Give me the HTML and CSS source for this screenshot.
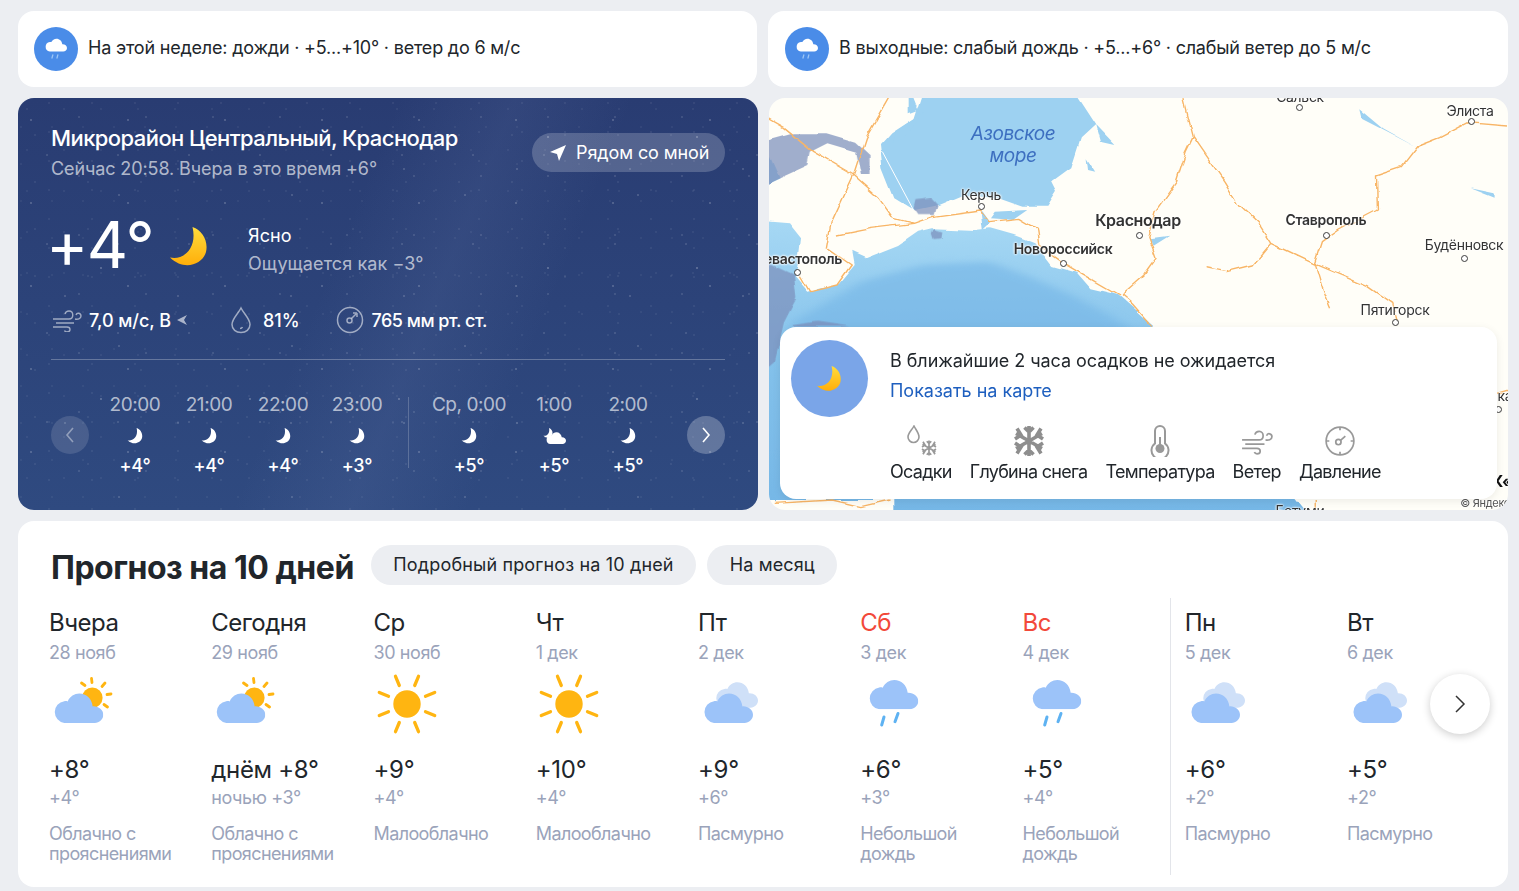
FILE: index.html
```html
<!DOCTYPE html>
<html lang="ru">
<head>
<meta charset="utf-8">
<title>Погода в Краснодаре</title>
<link rel="stylesheet" href="styles.css">
</head>
<body>
<svg class="defs" width="0" height="0" aria-hidden="true">
  <defs>
    <linearGradient id="moonGrad" x1="0" y1="0" x2="0" y2="1"><stop offset="0" stop-color="#ffdc3c"/><stop offset="1" stop-color="#ffae0a"/></linearGradient>
    <symbol id="moon" viewBox="0 0 16 16"><path d="M9.6 0C13.6 1.4 16 5.6 15 10 13.8 14.6 6.6 18 .6 12.2 6 13.4 11.6 8.6 9.6 0Z"/></symbol>
    <symbol id="cloud" viewBox="0 0 50 30"><path d="M11 30A11 11 0 0 1 11 8.2C12 8 13.4 8 14.4 8.4 16.6 3.4 21.2.6 26 .6 33 .6 38.400 5.600 39.400 13.400 45 13 50 16.800 50 21.800 50 26.400 46 30 41.500 30Z"/></symbol>
    <symbol id="wind" viewBox="0 0 30 24"><path d="M1 11H17C22 11 22 3 17 3 15 3 13.500 4 13 6M4 15H22M1 19H15C19 19 19 24 15 24 14 24 13 23.500 12.500 22.500M24 7C25 4 29 5 29 8 29 11 25.500 11.500 23 11"/></symbol>
    <symbol id="gauge" viewBox="0 0 30 30"><circle cx="15" cy="15" r="13"/><path d="M15 2V5M15 25V28M2 15H5M25 15H28"/><circle cx="13.500" cy="16" r="2.500"/><path d="M15.500 14.500L20 10.500"/></symbol>
    <symbol id="sunFull" viewBox="0 0 64 64">
      <circle cx="33" cy="32" r="13.700" class="sun"/>
      <path class="ray" d="M25.300 13.500L21.500 4.300M40.700 13.500L44.500 4.300M51.500 24.300L60.700 20.500M51.500 39.700L60.700 43.500M40.700 50.500L44.500 59.700M25.300 50.500L21.500 59.700M14.500 39.700L5.300 43.500M14.500 24.300L5.300 20.500"/>
    </symbol>
    <symbol id="partly" viewBox="0 0 64 64">
      <circle cx="43.300" cy="25.700" r="10.300" class="sun"/>
      <path class="ray ray-s" d="M43 10.500L42.500 6.500M53 14.500L56 11M58 22.500L62 22M55 32.500L58.500 35M36 13.500L32.500 11"/>
      <use href="#cloud" x="4.300" y="21" width="50" height="30" class="cloud-main"/>
    </symbol>
    <symbol id="overcast" viewBox="0 0 64 64">
      <use href="#cloud" x="17" y="8.500" width="43" height="28.500" class="cloud-back"/>
      <use href="#cloud" x="5" y="21" width="50" height="30" class="cloud-main"/>
    </symbol>
    <symbol id="rain" viewBox="0 0 64 64">
      <use href="#cloud" x="8.300" y="7.300" width="50" height="30" class="cloud-main"/>
      <path class="drops" d="M21.700 53L24 45M35 49.700L38 41.500"/>
    </symbol>
    <symbol id="badge" viewBox="0 0 44 44">
      <circle cx="22" cy="22" r="22" class="badge-bg"/>
      <use href="#cloud" x="11" y="11" width="22" height="14" class="badge-cloud"/>
      <path class="badge-drops" d="M18 31L18.800 28M23 31L23.800 28"/>
    </symbol>
    <symbol id="flake" viewBox="0 0 32 32"><path d="M16 1V31M3 8.500L29 23.500M3 23.500L29 8.500M11.500 2.500L16 7 20.500 2.500M11.500 29.500L16 25 20.500 29.500M2 14L8 10 4 3.500M30 18L24 22 28 28.500M30 14L24 10 28 3.500M2 18L8 22 4 28.500"/></symbol>
  </defs>
</svg>

<main class="page">
  <div class="summary-row">
    <a class="summary">
      <svg class="badge"><use href="#badge"/></svg>
      <span>На этой неделе: дожди · +5...+10° · ветер до 6 м/с</span>
    </a>
    <a class="summary">
      <svg class="badge"><use href="#badge"/></svg>
      <span>В выходные: слабый дождь · +5...+6° · слабый ветер до 5 м/с</span>
    </a>
  </div>

  <div class="main-row">
    <section class="hero">
      <div class="hero-head">
        <div>
          <h1 class="place">Микрорайон Центральный, Краснодар</h1>
          <p class="now">Сейчас 20:58. Вчера в это время +6°</p>
        </div>
        <button class="near">
          <svg class="near-icon" viewBox="0 0 16 16"><path d="M16 0L0 7 7 9 9 16Z"/></svg>
          Рядом со мной
        </button>
      </div>

      <div class="current">
        <div class="temp-big">+4°</div>
        <svg class="moon-big"><use href="#moon"/></svg>
        <div class="cond">
          <div>Ясно</div>
          <div class="feels">Ощущается как −3°</div>
        </div>
      </div>

      <div class="stats">
        <svg class="stat-wind"><use href="#wind"/></svg>
        <span class="stat-text stat-loose">7,0 м/с, В</span>
        <svg class="stat-dir" viewBox="0 0 10 10"><path d="M0 5L10 0 7 5 10 10Z"/></svg>
        <svg class="stat-drop" viewBox="0 0 22 28"><path d="M11 2C8 8 2 13 2 18.500 2 23.500 6 26.500 11 26.500 16 26.500 20 23.500 20 18.500 20 13 14 8 11 2ZM12.500 21C12 22 11 22.500 10 22.500"/></svg>
        <span class="stat-text stat-loose">81%</span>
        <svg class="stat-gauge" viewBox="0 0 28 28"><circle cx="14" cy="14" r="12.500"/><path d="M20 8L15.500 12.500M21 7H17M21 7V11"/><circle cx="13.500" cy="14.500" r="2.500"/></svg>
        <span class="stat-text">765 мм рт. ст.</span>
      </div>

      <div class="rule"></div>

      <div class="hours">
        <button class="hour-btn hour-btn-off"><svg viewBox="0 0 10 18"><path d="M8 2L2 9 8 16"/></svg></button>
        <div class="hour"><div class="hour-time">20:00</div><svg class="hour-icon"><use href="#moon"/></svg><div class="hour-temp">+4°</div></div>
        <div class="hour"><div class="hour-time">21:00</div><svg class="hour-icon"><use href="#moon"/></svg><div class="hour-temp">+4°</div></div>
        <div class="hour"><div class="hour-time">22:00</div><svg class="hour-icon"><use href="#moon"/></svg><div class="hour-temp">+4°</div></div>
        <div class="hour"><div class="hour-time">23:00</div><svg class="hour-icon"><use href="#moon"/></svg><div class="hour-temp">+3°</div></div>
        <div class="hour-sep"></div>
        <div class="hour hour-wide"><div class="hour-time">Ср, 0:00</div><svg class="hour-icon"><use href="#moon"/></svg><div class="hour-temp">+5°</div></div>
        <div class="hour"><div class="hour-time">1:00</div>
          <svg class="hour-icon hour-icon-cloud" viewBox="0 0 24 16"><use href="#moon" x="1" y="0" width="10" height="10"/><use href="#cloud" x="4" y="4" width="20" height="12"/></svg>
          <div class="hour-temp">+5°</div></div>
        <div class="hour"><div class="hour-time">2:00</div><svg class="hour-icon"><use href="#moon"/></svg><div class="hour-temp">+5°</div></div>
        <button class="hour-btn hour-btn-next"><svg viewBox="0 0 10 18"><path d="M2 2L8 9 2 16"/></svg></button>
      </div>
    </section>

    <section class="map">
      <svg class="map-art" viewBox="8 9 1545 1236" preserveAspectRatio="none">
        <defs>
          <linearGradient id="seaGrad" x1="0" y1="0" x2="0" y2="1"><stop offset="0" stop-color="#a6d8f4"/><stop offset=".5" stop-color="#82c0ea"/><stop offset="1" stop-color="#74b6e6"/></linearGradient>
          <filter id="wobble" x="-5%" y="-5%" width="110%" height="110%"><feTurbulence type="fractalNoise" baseFrequency=".018" numOctaves="3" seed="4"/><feDisplacementMap in="SourceGraphic" scale="16" xChannelSelector="R" yChannelSelector="G"/></filter>
          <filter id="soft" x="-10%" y="-10%" width="120%" height="120%"><feGaussianBlur stdDeviation="14 10"/></filter>
          <filter id="coast" x="-5%" y="-5%" width="110%" height="110%"><feTurbulence type="fractalNoise" baseFrequency=".014" numOctaves="2" seed="9"/><feDisplacementMap in="SourceGraphic" scale="14" xChannelSelector="R" yChannelSelector="G"/><feGaussianBlur stdDeviation="1.500 1"/></filter>
        </defs>
        <g class="f-coast">
          <path class="azov" d="M330 -20H640L690 90 660 130 640 220 600 262 610 290 590 335 540 335 490 310 410 300 360 330 310 345 270 310 245 220 240 150 262 115 310 70Z"/>
          <path class="azov" d="M690 90L730 150 700 140ZM672 190L690 230 675 225ZM300 -20L318 45 300 55ZM270 110L330 50 290 130 262 145ZM805 430L845 422 812 452ZM480 350L550 345 520 375 470 370ZM450 345L470 385 455 405ZM1240 40L1290 100 1365 160 1300 110 1245 70ZM1475 280L1525 295 1525 308Z"/>
          <path class="sea" d="M-30 375L50 385 75 430 70 490 60 540 90 590 150 570 185 510 180 470 210 490 280 450 320 410 350 400 440 405 470 400 520 420 565 445 600 510 650 530 680 580 740 600 780 650 815 695 1150 1290H270L270 1215H-30Z"/>
        </g>
        <path class="sea-deep" d="M60 680L200 560 330 510 470 500 560 550 640 600 720 660 780 720H60Z"/>
        <g class="f-coast">
          <path class="azov" d="M-30 60L30 250 -30 290Z"/>
          <path class="overlay" d="M-30 150L60 115 130 115 190 140 220 180 220 237 200 237 190 170 130 145 95 170 90 210 30 250 -30 290Z"/>
          <path class="overlay" d="M312 315L345 310 358 330 352 360 318 360 308 340ZM352 402L368 410 366 430 352 432 348 415ZM-30 480L60 540 65 610 40 680 20 800 -30 860ZM60 690L110 680 180 695H60Z"/>
        </g>
        <path class="strait" d="M245 170L310 345"/>
        <path class="road" d="M870 -20L885 70 895 125 880 170 860 260 815 350 800 430 815 490 790 540 750 590 745 600 770 630 810 695M895 125L960 260 990 330 1030 385 1057 445 1150 508 1260 575 1310 625 1320 680M1057 445L1020 510 965 530 925 518M1150 508L1165 440 1200 405 1280 345 1278 240 1330 215 1365 150 1410 125 1470 80 1553 90M1150 508L1165 580 1182 640M-10 60L40 100 100 170 185 240 240 310 270 370 310 385 350 365 450 345 470 380 530 370 565 400 570 450 620 500 680 550 740 600M185 240L140 380 130 460 180 510 150 570 95 590 75 540M150 420L220 400 310 385M270 -20L210 130 185 240M20 1225L140 1215 200 1235 260 1215M1150 1215L1150 1290M1520 900L1580 875"/>
      </svg>

      <span class="sea-name">Азовское<br>море</span>
      <span class="lbl lbl-salsk">Сальск</span><i class="pin pin-salsk"></i>
      <span class="lbl lbl-elista">Элиста</span><i class="pin pin-elista"></i>
      <span class="lbl lbl-kerch">Керчь</span><i class="pin pin-kerch"></i>
      <span class="lbl lbl-bold lbl-krasnodar">Краснодар</span><i class="pin pin-krasnodar"></i>
      <span class="lbl lbl-semi lbl-stavropol">Ставрополь</span><i class="pin pin-stavropol"></i>
      <span class="lbl lbl-semi lbl-novo">Новороссийск</span><i class="pin pin-novo"></i>
      <span class="lbl lbl-semi lbl-sev">Севастополь</span><i class="pin pin-sev"></i>
      <span class="lbl lbl-bud">Будённовск</span><i class="pin pin-bud"></i>
      <span class="lbl lbl-pyat">Пятигорск</span><i class="pin pin-pyat"></i>
      <span class="lbl lbl-frag">ка</span><i class="pin pin-frag"></i>
      <span class="lbl lbl-batumi">Батуми</span>
      <span class="lbl lbl-kk">К«</span>
      <span class="lbl lbl-copy">© Яндекс</span>

      <div class="nowcast">
        <div class="nowcast-top">
          <div class="nowcast-circle"><svg class="nowcast-moon"><use href="#moon"/></svg></div>
          <div class="nowcast-text">
            <div class="nowcast-title">В ближайшие 2 часа осадков не ожидается</div>
            <a class="nowcast-link">Показать на карте</a>
          </div>
        </div>
        <div class="layers">
          <div class="layer">
            <svg class="layer-icon" viewBox="0 0 32 32">
              <path class="ic-line" d="M9 1C7 5 3 8 3 12 3 15 5.500 17.500 8.500 17.500 11.500 17.500 14 15 14 12 14 8 11 5 9 1Z"/>
              <use href="#flake" x="16" y="15" width="16" height="16" class="ic-flake-s"/>
            </svg>
            <span>Осадки</span>
          </div>
          <div class="layer"><svg class="layer-icon"><use href="#flake" class="ic-flake"/></svg><span>Глубина снега</span></div>
          <div class="layer">
            <svg class="layer-icon" viewBox="0 0 32 32">
              <path class="ic-line ic-thick" d="M11 6A5 5 0 0 1 21 6V18.500A8.500 8.500 0 1 1 11 18.500Z"/>
              <circle cx="16" cy="23.500" r="4.500" class="ic-fill"/><path class="ic-line ic-thick" d="M16 12V22"/>
            </svg>
            <span>Температура</span>
          </div>
          <div class="layer"><svg class="layer-icon"><use href="#wind" class="ic-line"/></svg><span>Ветер</span></div>
          <div class="layer"><svg class="layer-icon"><use href="#gauge" class="ic-line"/></svg><span>Давление</span></div>
        </div>
      </div>
    </section>
  </div>

  <section class="forecast">
    <div class="fc-head">
      <h2 class="fc-title">Прогноз на 10 дней</h2>
      <a class="pill">Подробный прогноз на 10 дней</a>
      <a class="pill">На месяц</a>
    </div>
    <div class="days">
      <div class="day"><div class="d-name">Вчера</div><div class="d-date">28 нояб</div><svg class="d-icon"><use href="#partly"/></svg><div class="d-hi">+8°</div><div class="d-lo">+4°</div><div class="d-desc">Облачно с прояснениями</div></div>
      <div class="day"><div class="d-name">Сегодня</div><div class="d-date">29 нояб</div><svg class="d-icon"><use href="#partly"/></svg><div class="d-hi">днём +8°</div><div class="d-lo">ночью +3°</div><div class="d-desc">Облачно с прояснениями</div></div>
      <div class="day"><div class="d-name">Ср</div><div class="d-date">30 нояб</div><svg class="d-icon"><use href="#sunFull"/></svg><div class="d-hi">+9°</div><div class="d-lo">+4°</div><div class="d-desc">Малооблачно</div></div>
      <div class="day"><div class="d-name">Чт</div><div class="d-date">1 дек</div><svg class="d-icon"><use href="#sunFull"/></svg><div class="d-hi">+10°</div><div class="d-lo">+4°</div><div class="d-desc">Малооблачно</div></div>
      <div class="day"><div class="d-name">Пт</div><div class="d-date">2 дек</div><svg class="d-icon"><use href="#overcast"/></svg><div class="d-hi">+9°</div><div class="d-lo">+6°</div><div class="d-desc">Пасмурно</div></div>
      <div class="day"><div class="d-name d-red">Сб</div><div class="d-date">3 дек</div><svg class="d-icon"><use href="#rain"/></svg><div class="d-hi">+6°</div><div class="d-lo">+3°</div><div class="d-desc">Небольшой дождь</div></div>
      <div class="day"><div class="d-name d-red">Вс</div><div class="d-date">4 дек</div><svg class="d-icon"><use href="#rain"/></svg><div class="d-hi">+5°</div><div class="d-lo">+4°</div><div class="d-desc">Небольшой дождь</div></div>
      <div class="day day-week"><div class="d-name">Пн</div><div class="d-date">5 дек</div><svg class="d-icon"><use href="#overcast"/></svg><div class="d-hi">+6°</div><div class="d-lo">+2°</div><div class="d-desc">Пасмурно</div></div>
      <div class="day"><div class="d-name">Вт</div><div class="d-date">6 дек</div><svg class="d-icon"><use href="#overcast"/></svg><div class="d-hi">+5°</div><div class="d-lo">+2°</div><div class="d-desc">Пасмурно</div></div>
    </div>
    <button class="fc-next"><svg viewBox="0 0 12 20"><path d="M2 2L10 10 2 18"/></svg></button>
  </section>
</main>
</body>
</html>
```

FILE: styles.css
```css
* { box-sizing: border-box; }
html, body { margin: 0; height: 891px; overflow: hidden; }
body {
  background: #eceef2;
  font-family: Inter, "Noto Sans", Roboto, sans-serif;
  font-size: 18px;
  color: #21262b;
}
.defs { position: absolute; }
h1, h2, p { margin: 0; }
button { border: 0; padding: 0; font: inherit; color: inherit; }

.page { padding: 11px 11px 0 18px; display: flex; flex-direction: column; gap: 11px; }
.summary-row { display: grid; grid-template-columns: 739px 740px; gap: 11px; }
.main-row { display: grid; grid-template-columns: 740px 739px; gap: 11px; }

.summary {
  height: 76px; background: #fff; border-radius: 16px;
  display: flex; align-items: center; gap: 10px; padding: 0 0 1px 16px;
  font-size: 18px; letter-spacing: -0.2px;
}
.summary span { margin-bottom: 2px; }
.summary + .summary { padding-left: 17px; }
.badge { width: 44px; height: 44px; flex: none; }
.badge-bg { fill: #4a8ce8; }
.badge-cloud { fill: #fff; }
.badge-drops { stroke: #9cc6f5; stroke-width: 1.3; stroke-linecap: round; fill: none; }

/* Hero */
.hero {
  height: 412px; border-radius: 16px; padding: 27px 33px 0; color: #fff; overflow: hidden;
  background:
    radial-gradient(1px 1px at 13px 22px, rgba(255,255,255,.6), transparent),
    radial-gradient(1px 1px at 47px 71px, rgba(255,255,255,.5), transparent),
    radial-gradient(1.5px 1.5px at 83px 39px, rgba(255,255,255,.4), transparent),
    radial-gradient(1px 1px at 29px 57px, rgba(255,255,255,.4), transparent),
    radial-gradient(1px 1px at 101px 97px, rgba(255,255,255,.5), transparent),
    radial-gradient(1px 1px at 9px 11px, rgba(255,255,255,.18), transparent),
    radial-gradient(1px 1px at 31px 5px, rgba(255,255,255,.2), transparent),
    radial-gradient(1px 1px at 17px 37px, rgba(255,255,255,.22), transparent),
    radial-gradient(1.5px 1.5px at 61px 19px, rgba(255,255,255,.2), transparent),
    radial-gradient(1px 1px at 3px 29px, rgba(255,255,255,.16), transparent),
    linear-gradient(112deg, transparent 42%, rgba(120,140,190,.12) 55%, transparent 68%),
    linear-gradient(180deg, #293c72 0%, #2f4a80 100%);
  background-size: 97px 83px, 113px 127px, 149px 131px, 71px 89px, 173px 151px, 37px 41px, 43px 29px, 53px 47px, 67px 59px, 31px 37px, auto, auto;
}
.hero-head { display: flex; justify-content: space-between; align-items: flex-start; }
.place { font-size: 22px; font-weight: 500; line-height: 26px; letter-spacing: -0.57px; }
.now { margin-top: 6px; line-height: 24px; color: rgba(255,255,255,.65); letter-spacing: -0.11px; }
.near {
  margin-top: 8px; width: 193px; height: 39px; border-radius: 20px;
  background: rgba(255,255,255,.2); color: #fff;
  display: flex; align-items: center; gap: 10px; padding-left: 18px; letter-spacing: -0.1px;
}
.near-icon { width: 16px; height: 16px; fill: #fff; }

.current { margin-top: 32px; display: flex; align-items: flex-start; height: 64px; }
.temp-big { font-size: 64px; line-height: 64px; letter-spacing: -1.5px; width: 105px; margin-left: -5px; margin-right: 5px; white-space: nowrap; }
.moon-big { width: 41px; height: 40px; margin: 14px 0 0 12px; fill: url(#moonGrad); }
.cond { margin: 11px 0 0 39px; line-height: 24px; display: flex; flex-direction: column; gap: 4px; letter-spacing: 0.1px; }
.feels { color: rgba(255,255,255,.65); }

.stats { margin-top: 28px; height: 30px; display: flex; align-items: center; font-weight: 500; letter-spacing: -0.5px; }
.stat-loose { letter-spacing: -0.05px; }
.stat-wind { width: 30px; height: 24px; fill: none; stroke: rgba(255,255,255,.55); stroke-width: 1.4; margin: 0 7px 0 1px; }
.stat-dir { width: 10px; height: 10px; fill: rgba(255,255,255,.6); margin: 0 43px 0 6px; }
.stat-drop { width: 22px; height: 28px; fill: none; stroke: rgba(255,255,255,.55); stroke-width: 1.5; margin-right: 11px; }
.stat-gauge { width: 28px; height: 28px; fill: none; stroke: rgba(255,255,255,.55); stroke-width: 1.5; margin: 0 8px 0 36px; }

.rule { margin-top: 24px; height: 1px; background: rgba(255,255,255,.27); }

.hours { margin-top: 33px; display: flex; align-items: center; }
.hour { width: 74px; flex: none; display: flex; flex-direction: column; align-items: center; }
.hour-wide { width: 96px; }
.hour-time { line-height: 24px; font-size: 19px; color: rgba(255,255,255,.65); letter-spacing: -0.45px; white-space: nowrap; }
.hour-icon { width: 16px; height: 16px; margin-top: 11px; fill: #fff; }
.hour-icon-cloud { width: 24px; }
.hour-temp { margin-top: 11px; line-height: 22px; font-weight: 500; letter-spacing: -0.2px; }
.hour-sep { width: 1px; height: 71px; margin: 4px 12px 0 14px; align-self: flex-start; background: rgba(255,255,255,.2); }
.hour-btn { width: 38px; height: 38px; border-radius: 50%; background: rgba(255,255,255,.25); flex: none; display: flex; align-items: center; justify-content: center; }
.hour-btn svg { width: 10px; height: 18px; fill: none; stroke: #fff; stroke-width: 1.6; }
.hour-btn-off { background: rgba(255,255,255,.13); margin-right: 9px; }
.hour-btn-off svg { opacity: .4; }
.hour-btn-next { margin-left: auto; }

/* Map */
.map { position: relative; height: 412px; border-radius: 16px; overflow: hidden; background: #fffef8; }
.map-art { position: absolute; inset: 0; width: 100%; height: 100%; }
.f-coast { filter: url(#coast); }
.azov { fill: #9dd1f1; }
.sea { fill: url(#seaGrad); }
.sea-deep { fill: #74b5e6; opacity: .6; filter: url(#soft); }
.overlay { fill: #7b8fbb; opacity: .72; }
.strait { stroke: #fff; fill: none; stroke-width: 1; vector-effect: non-scaling-stroke; }
.road { fill: none; stroke: #f8b566; stroke-width: 1.4; vector-effect: non-scaling-stroke; stroke-linejoin: round; filter: url(#wobble); }

.sea-name { position: absolute; left: 184px; top: 25px; width: 120px; text-align: center; color: #3d6fc0; font-style: italic; font-size: 19px; line-height: 22px; letter-spacing: -0.4px; }
.lbl { position: absolute; font-size: 14px; line-height: 16px; color: #333; white-space: nowrap; transform: translateX(-50%); text-shadow: 0 0 2px #fff, 0 0 2px #fff, 0 0 3px #fff; letter-spacing: -0.3px; }
.lbl-bold { font-size: 16px; font-weight: 600; letter-spacing: -0.4px; }
.lbl-semi { font-weight: 600; }
.pin { position: absolute; width: 7px; height: 7px; margin: -3.500px 0 0 -3.500px; border: 1.300px solid #3a3a3a; border-radius: 50%; background: #fff; }
.lbl-salsk { left: 531px; top: -9px; } .pin-salsk { left: 530px; top: 9px; }
.lbl-elista { left: 701px; top: 5px; } .pin-elista { left: 702px; top: 23px; }
.lbl-kerch { left: 212px; top: 89px; } .pin-kerch { left: 212px; top: 108px; }
.lbl-krasnodar { left: 369px; top: 114px; } .pin-krasnodar { left: 370px; top: 137px; }
.lbl-stavropol { left: 557px; top: 114px; } .pin-stavropol { left: 557px; top: 137px; }
.lbl-novo { left: 294px; top: 143px; } .pin-novo { left: 294px; top: 165px; }
.lbl-sev { left: 29px; top: 153px; } .pin-sev { left: 28px; top: 174px; }
.lbl-bud { left: 695px; top: 139px; } .pin-bud { left: 695px; top: 160px; }
.lbl-pyat { left: 626px; top: 204px; } .pin-pyat { left: 626px; top: 224px; }
.lbl-frag { left: 736px; top: 290px; } .pin-frag { left: 729px; top: 311px; }
.lbl-batumi { left: 531px; top: 405px; }
.lbl-kk { left: 733px; top: 375px; font-weight: 700; color: #111; font-size: 16px; }
.lbl-copy { left: 716px; top: 397px; font-size: 11px; color: #555; }

.nowcast {
  position: absolute; left: 11px; top: 229px; width: 717px; height: 172px;
  background: #fff; border-radius: 16px; padding: 13px 11px;
  box-shadow: 0 2px 8px rgba(0,0,0,.08);
}
.nowcast-top { display: flex; gap: 22px; }
.nowcast-circle { width: 77px; height: 77px; border-radius: 50%; background: #7aa5e8; display: flex; align-items: center; justify-content: center; flex: none; }
.nowcast-moon { width: 26px; height: 26px; margin-right: 2px; fill: url(#moonGrad); }
.nowcast-text { padding-top: 9px; }
.nowcast-title { line-height: 24px; letter-spacing: -0.05px; }
.nowcast-link { display: block; margin-top: 6px; line-height: 24px; color: #1e5fbf; letter-spacing: -0.02px; }
.layers { position: absolute; left: 110px; top: 98px; display: flex; gap: 18px; letter-spacing: -0.72px; }
.layer { display: flex; flex-direction: column; align-items: center; gap: 3px; line-height: 24px; white-space: nowrap; }
.layer-icon { width: 32px; height: 32px; }
.ic-line { fill: none; stroke: #999; stroke-width: 1.6; }
.ic-thick { stroke-width: 2; }
.ic-fill { fill: #999; }
.ic-flake { fill: none; stroke: #8e8e8e; stroke-width: 3.600; }
.ic-flake-s { fill: none; stroke: #999; stroke-width: 3.400; }

/* Forecast */
.forecast { position: relative; height: 366px; background: #fff; border-radius: 16px; padding: 24px 0 0 32px; overflow: hidden; }
.fc-head { display: flex; align-items: flex-start; height: 40px; gap: 11px; padding-left: 1px; }
.fc-title { font-size: 32px; font-weight: 700; line-height: 40px; letter-spacing: -0.48px; margin: 3px 6px 0 0; white-space: nowrap; }
.pill { height: 40px; padding: 0 22.500px; border-radius: 20px; background: #eceef2; line-height: 40px; letter-spacing: 0.15px; white-space: nowrap; }

.days { margin-top: 24px; margin-left: -1px; display: grid; grid-template-columns: repeat(9, 162.250px); }
.day { position: relative; padding-right: 24px; }
.day-week::before { content: ""; position: absolute; left: -15px; top: -11px; height: 277px; width: 1px; background: #e3e5ea; }
.d-name { font-size: 24px; line-height: 28px; letter-spacing: -0.5px; }
.d-red { color: #f2493a; }
.d-date { margin-top: 4px; line-height: 24px; color: #9aa3ba; letter-spacing: -0.4px; }
.d-icon { display: block; width: 64px; height: 64px; margin-top: 7px; }
.d-hi { margin-top: 20px; font-size: 24px; line-height: 28px; letter-spacing: -0.3px; white-space: nowrap; }
.d-lo { margin-top: 3px; line-height: 22px; color: #9aa3ba; letter-spacing: -0.4px; }
.d-desc { margin-top: 15px; line-height: 19.600px; color: #9aa3ba; letter-spacing: -0.6px; }

.sun { fill: #ffb511; }
.ray { stroke: #ffb511; stroke-width: 3.300; stroke-linecap: round; fill: none; }
.ray-s { stroke-width: 2.800; }
.cloud-main { fill: #9cc3f9; }
.cloud-back { fill: #cfe0f8; }
.drops { stroke: #5eb2f2; stroke-width: 3; stroke-linecap: round; fill: none; }

.fc-next {
  position: absolute; left: 1412px; top: 153px; width: 60px; height: 60px; border-radius: 50%;
  background: #fff; box-shadow: 0 2px 8px rgba(0,0,0,.2);
  display: flex; align-items: center; justify-content: center;
}
.fc-next svg { width: 12px; height: 20px; fill: none; stroke: #333; stroke-width: 1.5; }
```
